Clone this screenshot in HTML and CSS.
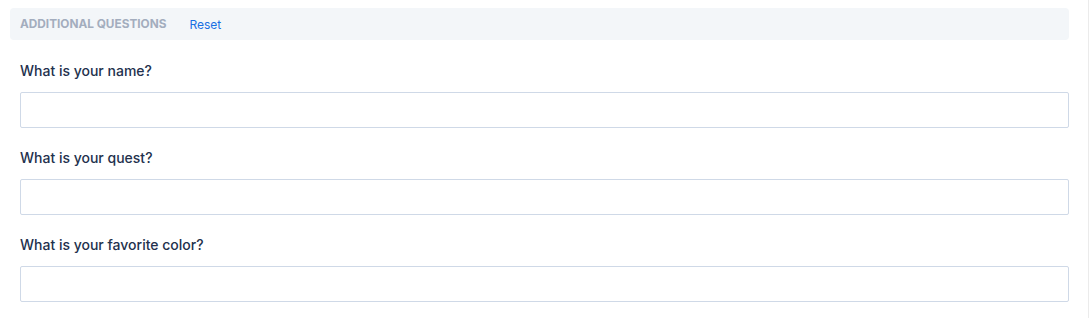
FILE: index.html
```html
<!DOCTYPE html>
<html lang="en">
<head>
    <meta charset="utf-8">
    <title>Additional Questions</title>
    <link rel="stylesheet" href="styles.css">
</head>
<body>
    <main class="questions-panel">
        <header class="questions-header">
            <h2 class="questions-title">Additional Questions</h2>
            <button class="questions-reset" type="button">Reset</button>
        </header>

        <form class="questions-form">
            <div class="question-field">
                <label class="question-label" for="q-name">What is your name?</label>
                <input class="question-input" id="q-name" type="text">
            </div>
            <div class="question-field">
                <label class="question-label" for="q-quest">What is your quest?</label>
                <input class="question-input" id="q-quest" type="text">
            </div>
            <div class="question-field">
                <label class="question-label" for="q-color">What is your favorite color?</label>
                <input class="question-input" id="q-color" type="text">
            </div>
        </form>
    </main>
</body>
</html>
```

FILE: styles.css
```css
:root {
    --header-bg: #f3f6f9;
    --muted: #a3adbe;
    --link: #1a6fe3;
    --text: #23314d;
    --input-border: #cfd9e7;
}

* {
    margin: 0;
    padding: 0;
    box-sizing: border-box;
}

body {
    font-family: Inter, "Noto Sans", sans-serif;
    background: #fff;
    color: var(--text);
}

.questions-panel {
    width: 1089px;
    min-height: 318px;
    padding: 8px 19px 0 10px;
    border-right: 1px solid #ebebeb;
}

.questions-header {
    display: flex;
    align-items: center;
    height: 32px;
    padding: 0 10px;
    background: var(--header-bg);
    border-radius: 4px;
}

.questions-title {
    font-size: 11.8px;
    font-weight: 700;
    text-transform: uppercase;
    color: var(--muted);
}

.questions-reset {
    margin-left: 23px;
    border: 0;
    background: none;
    font: inherit;
    font-size: 12px;
    color: var(--link);
    cursor: pointer;
}

.questions-form {
    display: flex;
    flex-direction: column;
    gap: 20px;
    padding: 21px 0 0 10px;
}

.question-field {
    display: flex;
    flex-direction: column;
    gap: 11px;
}

.question-label {
    font-size: 14px;
    font-weight: 500;
    line-height: 20px;
    color: var(--text);
}

.question-input {
    height: 36px;
    width: 100%;
    border: 1px solid var(--input-border);
    border-radius: 2px;
    padding: 0 10px;
    font: inherit;
    font-size: 14px;
}
```
